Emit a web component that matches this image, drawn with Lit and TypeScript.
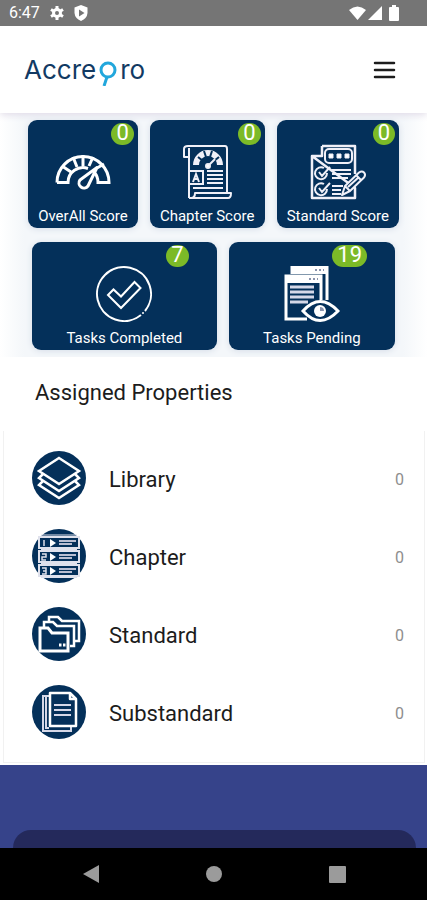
import { LitElement, html, css, svg, TemplateResult } from "lit";
import { customElement } from "lit/decorators.js";

const NAVY = "#04305a";

const gauge = svg`<svg viewBox="0 0 56 56" fill="none" stroke="#fff" stroke-width="3">
  <path d="M2 38.500A26 26 0 0 1 54 38.500H43A15 15 0 0 0 39 28M2 38.500H13A15 15 0 0 1 33 24.500" />
  <path d="M7 22l9 6M18 13l4 10M28 11v11M38 13l-4 9" />
  <path d="M42 23.500L25 36a5 5 0 1 0 8 6Z" stroke-linejoin="round" fill="${NAVY}" />
  <path d="M49 20l-7 4" />
</svg>`;

const scroll = svg`<svg viewBox="0 0 56 56" fill="none" stroke="#f0f0f8" stroke-width="2">
  <path d="M10 13H5V5q0-3 4-3H46Q48 2 48 5V49M10 4V54" stroke-linejoin="round" />
  <path d="M10 54H49Q52 54 52 49H16Q16 54 12 54" stroke-linejoin="round" />
  <path d="M17 21A12 12 0 0 1 41 21" stroke-width="6" />
  <path d="M19 13l5 4M25 7l2 6M33 7l-2 6M40 13l-5 4" stroke="${NAVY}" />
  <path d="M36 15l-7 7" />
  <circle cx="29" cy="22" r="2" fill="#fff" />
  <rect x="10" y="27" width="14" height="13" />
  <path d="M14 38l3-8 3 8M15 35h4" />
  <path d="M28 27H44M28 31H44M28 35H44M28 39H44M14 44H44" />
</svg>`;

const checklist = svg`<svg viewBox="0 0 56 56" fill="none" stroke="#f0f0f8" stroke-width="2">
  <path d="M12 2H45V30M45 44V54H2V12ZM12 2V12H2" stroke-width="2.500" stroke-linejoin="round" />
  <rect x="15" y="5" width="27" height="14" rx="4" fill="${NAVY}" />
  <path d="M19 10h4v4h-4ZM27 10h4v4h-4ZM35 10h4v4h-4Z" fill="#fff" stroke-width="1" />
  <path d="M17 29a6 6 0 1 1-3-5M9 28l3 4 8-9M17 45a6 6 0 1 1-3-5M9 44l3 4 8-9" />
  <path d="M22 26H41M22 30H41M22 34H38M22 42H33M22 46H31M22 50H31" />
  <path d="M32 51l3-9L49 28.500q3-2 5 0t0 5L40 47ZM35 42l5 5M46 31l5 5M38 43L49 33" fill="${NAVY}" stroke-linejoin="round" />
</svg>`;

const tick = svg`<svg viewBox="0 0 56 56" fill="none" stroke="#fff" stroke-width="2">
  <path d="M45 49A27 27 0 1 1 49 45" />
  <circle cx="47" cy="47" r="1" fill="#fff" stroke="none" />
  <path d="M12 29l5.500-5.500 7.500 7L38.500 16l6 6L25 42Z" />
</svg>`;

const pending = svg`<svg viewBox="0 0 56 56" fill="none" stroke="#fff" stroke-width="3">
  <path d="M8 8V1H43V34" />
  <path d="M8 1h35v6H8Z" fill="#fff" stroke-width="2" />
  <path d="M37 34V10H2V53H23" />
  <path d="M2 10h35v6H2Z" fill="#fff" stroke-width="2" />
  <path d="M31 4h2M35 4h2M39 4h1M25 13h2M29 13h2M33 13h1" stroke="#8a93ac" stroke-width="2" />
  <path d="M6 21H30M6 26H30M6 31H30M6 36H24" stroke="#d5d8e8" />
  <path d="M19 45Q36 26 54 45Q36 64 19 45Z" fill="${NAVY}" />
  <circle cx="36" cy="45" r="6" fill="#fff" stroke="none" />
  <path d="M36 45v-4a4 4 0 0 1 4 4Z" fill="#8a93ac" stroke="none" />
</svg>`;

const layers = svg`<svg viewBox="0 0 54 54" fill="none" stroke="#fff" stroke-width="2.500">
  <circle cx="27" cy="27" r="27" fill="${NAVY}" stroke="none" />
  <path d="M27 7L47 20 27 33 7 20Z" />
  <path d="M11 23l-4 4 20 13 20-13-4-4M11 30l-4 4 20 13 20-13-4-4" />
</svg>`;

const racks = svg`<svg viewBox="0 0 54 54" fill="none" stroke="#dfe1ec" stroke-width="2">
  <circle cx="27" cy="27" r="27" fill="${NAVY}" stroke="none" />
  ${[8, 22, 36].map(
    (y, i) => svg`
      <rect x="7" y="${y}" width="40" height="11" />
      <path d="M27 ${y + 4}H44M27 ${y + 7}H40" stroke="#b9bed2" />
      <path d="M18 ${y + 2}l6 4-6 4Z" fill="#fff" stroke="none" />
      <path d="${
        i === 0
          ? `M12 ${y + 3}v6`
          : i === 1
            ? `M10 ${y + 3}h4v3h-4v3h4`
            : `M10 ${y + 3}h4v6h-4M11 ${y + 6}h3`
      }" stroke-width="1.500" />`
  )}
  <path d="M9 6H45M9 20.500H45M9 34.500H45M9 48.500H45" stroke-width="1" />
</svg>`;

const folders = svg`<svg viewBox="0 0 54 54" fill="none" stroke="#fff" stroke-width="2.500">
  <circle cx="27" cy="27" r="27" fill="${NAVY}" stroke="none" />
  <path d="M17 14V10h9l4 4H47V34H43" />
  <path d="M12 20V15h9l4 4H42V39H38" />
  <path d="M8 21h8l4 5H36V44H8Z" fill="${NAVY}" stroke-width="3" />
  <path d="M27 38h2.500M31 38h2.500" stroke-width="3" />
</svg>`;

const pages = svg`<svg viewBox="0 0 54 54" fill="none" stroke="#fff" stroke-width="2">
  <circle cx="27" cy="27" r="27" fill="${NAVY}" stroke="none" />
  <path d="M17 11H11V46H39V42M14 12V43H17" stroke="#d5d8e8" />
  <path d="M18 8H38L44 14V41H18ZM38 8V14H44" stroke-width="2.500" stroke-linejoin="round" />
  <path d="M22 20H39M22 25H39M22 30H39" stroke="#d5d8e8" />
</svg>`;

interface Tile {
  label: string;
  count: number;
  icon: TemplateResult<2>;
}

@customElement("app-root")
export class AppRoot extends LitElement {
  static styles = css`
    :host {
      display: flex;
      flex-direction: column;
      min-height: 100vh;
      background: #fff;
      color: #1c1c1c;
      font-family: Roboto, "Liberation Sans", sans-serif;
    }
    button {
      border: 0;
      padding: 0;
      margin: 0;
      background: none;
      font: inherit;
      color: inherit;
      cursor: pointer;
    }
    svg {
      display: block;
    }
    .status {
      position: relative;
      z-index: 1;
      display: flex;
      align-items: center;
      gap: 10px;
      height: 26px;
      padding: 0 28px 0 9px;
      background: #757575;
      color: #fff;
      font-size: 16px;
    }
    .status svg {
      width: 14px;
      height: 16px;
    }
    .time {
      line-height: 28px;
    }
    .signals {
      display: flex;
      align-items: center;
      gap: 2px;
      margin-left: auto;
    }
    .signals .wifi {
      width: 17px;
    }
    .signals .battery {
      width: 10px;
      margin-left: 5px;
    }
    header {
      display: flex;
      align-items: center;
      justify-content: space-between;
      height: 87px;
      padding: 0 31px 0 24px;
      box-sizing: border-box;
      background: #fff;
      box-shadow: 0 1px 8px #dcd6e4;
      position: relative;
    }
    .logo {
      display: flex;
      align-items: center;
      color: #123a63;
      font-family: Inter, "Open Sans", sans-serif;
      font-size: 26px;
      line-height: 32px;
      text-decoration: none;
    }
    .logo svg {
      width: 18px;
      height: 32px;
      margin: 0 3px;
    }
    .menu svg {
      width: 24px;
      height: 24px;
    }
    .tiles {
      display: flex;
      flex-direction: column;
      gap: 14px;
      padding: 7px 28px;
      background: linear-gradient(90deg, #fff, #f4f7fa 24px, #f4f7fa calc(100% - 24px), #fff);
    }
    .row {
      display: flex;
      gap: 12px;
    }
    .row.wide {
      padding: 0 4px;
    }
    .tile {
      position: relative;
      flex: 1 1 auto;
      display: flex;
      flex-direction: column;
      align-items: center;
      height: 108px;
      padding: 24px 8px 0;
      border-radius: 9px;
      background: #04305a;
      color: #fff;
      font-size: 15px;
      line-height: 20px;
      white-space: nowrap;
      box-shadow: 0 1px 6px #d5dde8;
    }
    .wide .tile {
      padding: 24px 32px 0;
    }
    .tile svg {
      width: 56px;
      height: 56px;
      margin-bottom: 6px;
    }
    .badge {
      position: absolute;
      top: 3px;
      right: 4px;
      min-width: 22px;
      height: 22px;
      padding: 0 5px;
      box-sizing: border-box;
      border-radius: 11px;
      background: #7cba27;
      font-size: 22px;
      line-height: 20px;
      display: flex;
      justify-content: center;
    }
    .wide .badge {
      right: 28px;
    }
    h2 {
      margin: 0;
      padding: 20px 35px 22px;
      font-size: 22px;
      line-height: 32px;
      font-weight: 400;
    }
    ul {
      list-style: none;
      margin: 0 2px 2px 3px;
      padding: 8px 20px 11px 28px;
      border: 1px solid #f1f1f1;
      border-top: 0;
    }
    .item {
      display: flex;
      align-items: center;
      width: 100%;
      height: 78px;
      font-size: 22px;
      line-height: 26px;
      text-align: left;
    }
    .item svg {
      width: 54px;
      height: 54px;
      margin-right: 23px;
    }
    .name,
    .value {
      padding-top: 4px;
    }
    .value {
      margin-left: auto;
      color: #8e8e8e;
      font-size: 16px;
    }
    .banner {
      flex: 1 0 83px;
      display: flex;
      align-items: flex-end;
      padding: 0 11px 0 13px;
      background: #36438a;
    }
    .sheet {
      flex: 1;
      height: 18px;
      border-radius: 20px 20px 0 0;
      background: #24295b;
    }
    nav {
      display: flex;
      justify-content: space-around;
      align-items: center;
      height: 52px;
      padding: 0 29px;
      background: #000;
    }
    nav svg {
      width: 18px;
      height: 18px;
      fill: #9b9b9b;
    }
  `;

  private scores: Tile[] = [
    { label: "OverAll Score", count: 0, icon: gauge },
    { label: "Chapter Score", count: 0, icon: scroll },
    { label: "Standard Score", count: 0, icon: checklist },
  ];

  private tasks: Tile[] = [
    { label: "Tasks Completed", count: 7, icon: tick },
    { label: "Tasks Pending", count: 19, icon: pending },
  ];

  private properties: Tile[] = [
    { label: "Library", count: 0, icon: layers },
    { label: "Chapter", count: 0, icon: racks },
    { label: "Standard", count: 0, icon: folders },
    { label: "Substandard", count: 0, icon: pages },
  ];

  private tile(t: Tile) {
    return html`<button class="tile">
      ${t.icon}<span>${t.label}</span><span class="badge">${t.count}</span>
    </button>`;
  }

  render() {
    return html`
      <div class="status">
        <span class="time">6:47</span>
        <svg viewBox="0 0 14 16" fill="none" stroke="#fff">
          <circle cx="7" cy="8" r="3.500" stroke-width="3" />
          <path d="M7 1v3M7 12v3M1 4.500l2.500 1.500M10.500 10l2.500 1.500M1 11.500l2.500-1.500M10.500 6l2.500-1.500" stroke-width="3" />
        </svg>
        <svg viewBox="0 0 14 16">
          <path d="M7 0l6.500 2.500V8Q13 13.500 7 16 1 13.500.5 8V2.500Z" fill="#fff" />
          <path d="M5 4.500l5.500 3.500L5 11.500Z" fill="#757575" />
        </svg>
        <div class="signals">
          <svg class="wifi" viewBox="0 0 17 16"><path d="M0 5Q8.500-2 17 5L8.500 15Z" fill="#fff" /></svg>
          <svg viewBox="0 0 14 16"><path d="M14 1V15H0Z" fill="#fff" /></svg>
          <svg class="battery" viewBox="0 0 10 16">
            <path d="M3 0h4v2h2q1 0 1 1v12q0 1-1 1H1q-1 0-1-1V3q0-1 1-1h2Z" fill="#fff" />
          </svg>
        </div>
      </div>
      <header>
        <a class="logo" href="#" aria-label="Accrepro">
          <span>Accre</span>
          <svg viewBox="0 0 18 32" fill="none" stroke="#22a7dc" stroke-width="3">
            <circle cx="9" cy="16" r="7" />
            <path d="M8 23L5 32" />
          </svg>
          <span>ro</span>
        </a>
        <button class="menu" aria-label="Menu">
          <svg viewBox="0 0 24 24" stroke="#1c1c1c" stroke-width="2.500" stroke-linecap="round">
            <path d="M3 5H22M3 12H22M3 19H22" />
          </svg>
        </button>
      </header>
      <section class="tiles">
        <div class="row">${this.scores.map((t) => this.tile(t))}</div>
        <div class="row wide">${this.tasks.map((t) => this.tile(t))}</div>
      </section>
      <h2>Assigned Properties</h2>
      <ul>
        ${this.properties.map(
          (p) => html`<li>
            <button class="item">
              ${p.icon}<span class="name">${p.label}</span><span class="value">${p.count}</span>
            </button>
          </li>`
        )}
      </ul>
      <div class="banner"><div class="sheet"></div></div>
      <nav>
        <button aria-label="Back"><svg viewBox="0 0 18 18"><path d="M17 0V18L1 9Z" /></svg></button>
        <button aria-label="Home"><svg viewBox="0 0 18 18"><circle cx="9" cy="9" r="8" /></svg></button>
        <button aria-label="Recent apps"><svg viewBox="0 0 18 18"><rect x="1" y="1" width="17" height="17" rx="1" /></svg></button>
      </nav>
    `;
  }
}
